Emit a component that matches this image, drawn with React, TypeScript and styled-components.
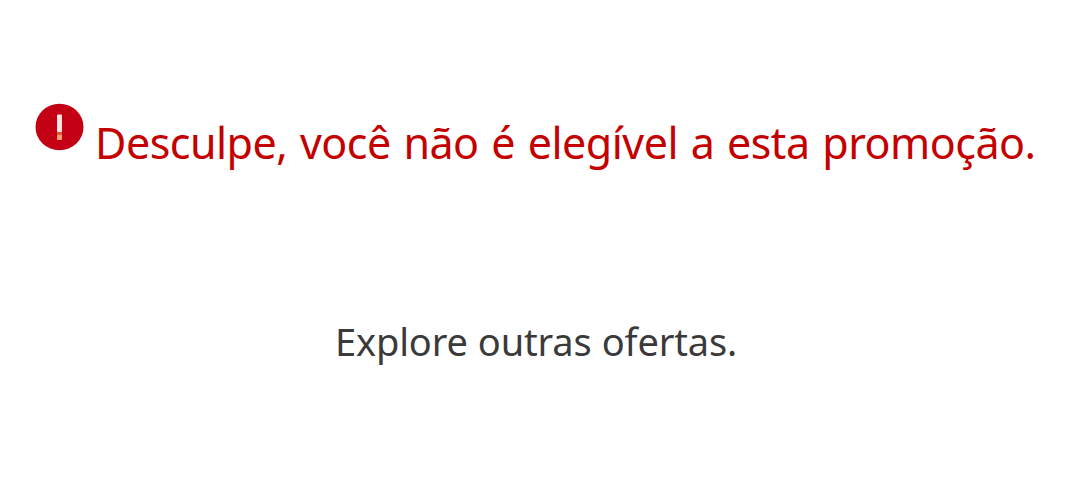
import React from 'react'
import styled, { createGlobalStyle } from 'styled-components'

const GlobalStyle = createGlobalStyle`
  body {
    margin: 0;
    background: #fff;
    font-family: 'Noto Sans', 'Open Sans', sans-serif;
  }
`

const PageWrapper = styled.main`
  height: 500px;
  overflow: hidden;
  padding-top: 103px;
  box-sizing: border-box;
`

const ErrorRow = styled.div`
  display: flex;
  align-items: flex-start;
  padding-left: 35px;
`

const AlertIcon = styled.svg`
  width: 49px;
  height: 48px;
  flex: none;
`

const ErrorText = styled.h1`
  margin: 10px 0 0 11px;
  color: #c40000;
  font-size: 43px;
  font-weight: 400;
  line-height: 60px;
  letter-spacing: -0.5px;
  word-spacing: 2px;
  white-space: nowrap;
`

const OffersText = styled.p`
  margin: 141px 0 0 335px;
  color: #3a3a3a;
  font-size: 38px;
  line-height: 54px;
  letter-spacing: -0.15px;
  word-spacing: 0.4px;
  white-space: nowrap;
`

export default function App() {
  return (
    <PageWrapper>
      <GlobalStyle />
      <ErrorRow>
        <AlertIcon viewBox="0 0 49 48" aria-hidden="true">
          <ellipse cx="24.5" cy="24" rx="24" ry="23.3" fill="#c40014" />
          <rect x="22" y="11.5" width="5" height="17.5" rx="0.8" fill="#f9e4e4" />
          <rect x="22" y="29" width="5" height="2.5" fill="#e0562f" />
          <rect x="22" y="31.5" width="5" height="5.5" rx="0.8" fill="#f5a070" />
        </AlertIcon>
        <ErrorText>Desculpe, você não é elegível a esta promoção.</ErrorText>
      </ErrorRow>
      <OffersText>Explore outras ofertas.</OffersText>
    </PageWrapper>
  )
}
